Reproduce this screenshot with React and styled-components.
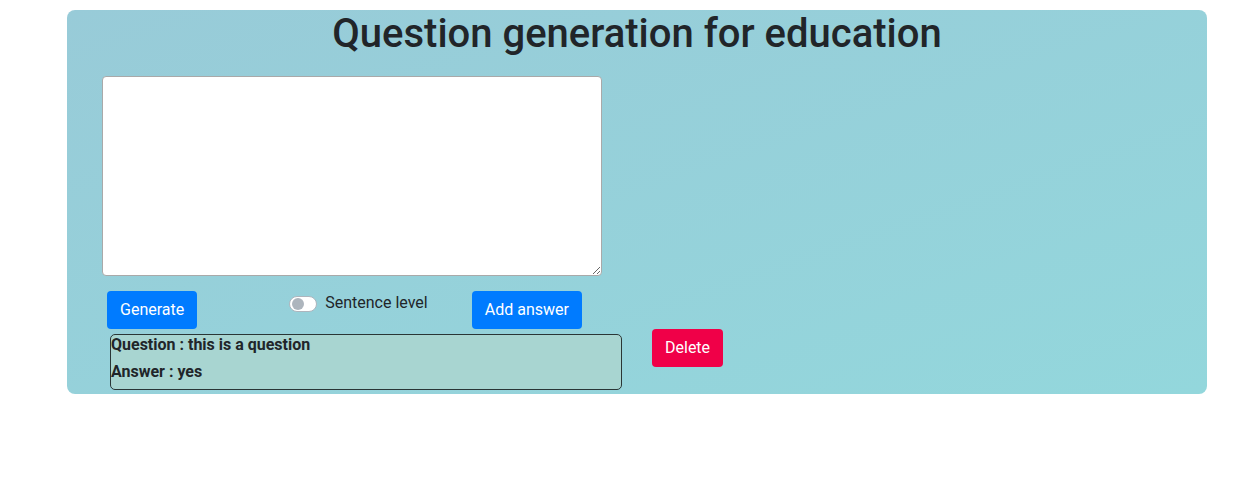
import React from "react";
import styled, { createGlobalStyle } from "styled-components";

const Global = createGlobalStyle`
  html, body { margin: 0; padding: 0; background: #fff; }
  body {
    font-family: Roboto, "Liberation Sans", sans-serif;
    font-size: 16px;
    line-height: 1.5;
    color: #212529;
  }
  * { box-sizing: border-box; }
`;

const Page = styled.div`
  padding: 10px 0 0 67px;
`;

const Card = styled.section`
  width: 1140px;
  height: 384px;
  border-radius: 8px;
  background: linear-gradient(to bottom right, #98cbd8, #93d7dc);
  padding: 0 0 0 35px;
  display: flex;
  flex-direction: column;
`;

const Title = styled.h1`
  margin: 0 0 18px -35px;
  font-size: 40px;
  font-weight: 500;
  line-height: 48px;
  text-align: center;
  color: #212529;
`;

const TextArea = styled.textarea`
  width: 500px;
  height: 200px;
  border: 1px solid #a9a9a9;
  border-radius: 4px;
  background: #fff;
  font-family: inherit;
  font-size: 16px;
  resize: both;
  outline: none;
  display: block;
  margin: 0;
`;

const ButtonRow = styled.div`
  display: flex;
  align-items: flex-start;
  margin: 15px 0 0 5px;
`;

const Button = styled.button`
  height: 38px;
  padding: 0 13px;
  border: none;
  border-radius: 4px;
  background: ${(p) => (p.$variant === "danger" ? "#f00048" : "#007bff")};
  color: #fff;
  font-family: inherit;
  font-size: 16px;
  line-height: 38px;
  cursor: pointer;
  margin-left: ${(p) => p.$ml || 0}px;
  flex: none;
`;

const SwitchLabel = styled.label`
  display: flex;
  align-items: center;
  height: 24px;
  margin-left: 92px;
  gap: 8px;
  font-size: 16px;
  line-height: 24px;
  color: #212529;
`;

const Track = styled.span`
  width: 28px;
  height: 16px;
  border: 1px solid #adb5bd;
  border-radius: 8px;
  background: #fff;
  display: flex;
  align-items: center;
  padding-left: 2px;
  margin-top: 1px;
`;

const Knob = styled.span`
  width: 12px;
  height: 12px;
  border-radius: 50%;
  background: #adb5bd;
`;

const ResultRow = styled.div`
  display: flex;
  align-items: flex-start;
  margin-left: 8px;
`;

const QABox = styled.div`
  width: 512px;
  height: 56px;
  margin-top: 5px;
  border: 1px solid #2a3636;
  border-radius: 5px;
  background: #a8d5d1;
  display: flex;
  flex-direction: column;
  gap: 8px;
`;

const QALine = styled.div`
  font-weight: 700;
  font-size: 16px;
  line-height: 19px;
  color: #212529;
`;

export default function App() {
  return (
    <>
      <Global />
      <Page>
        <Card>
          <Title>Question generation for education</Title>
          <TextArea />
          <ButtonRow>
            <Button>Generate</Button>
            <SwitchLabel>
              <Track>
                <Knob />
              </Track>
              Sentence level
            </SwitchLabel>
            <Button $ml={44}>Add answer</Button>
          </ButtonRow>
          <ResultRow>
            <QABox>
              <QALine>Question : this is a question</QALine>
              <QALine>Answer : yes</QALine>
            </QABox>
            <Button $variant="danger" $ml={30}>Delete</Button>
          </ResultRow>
        </Card>
      </Page>
    </>
  );
}
